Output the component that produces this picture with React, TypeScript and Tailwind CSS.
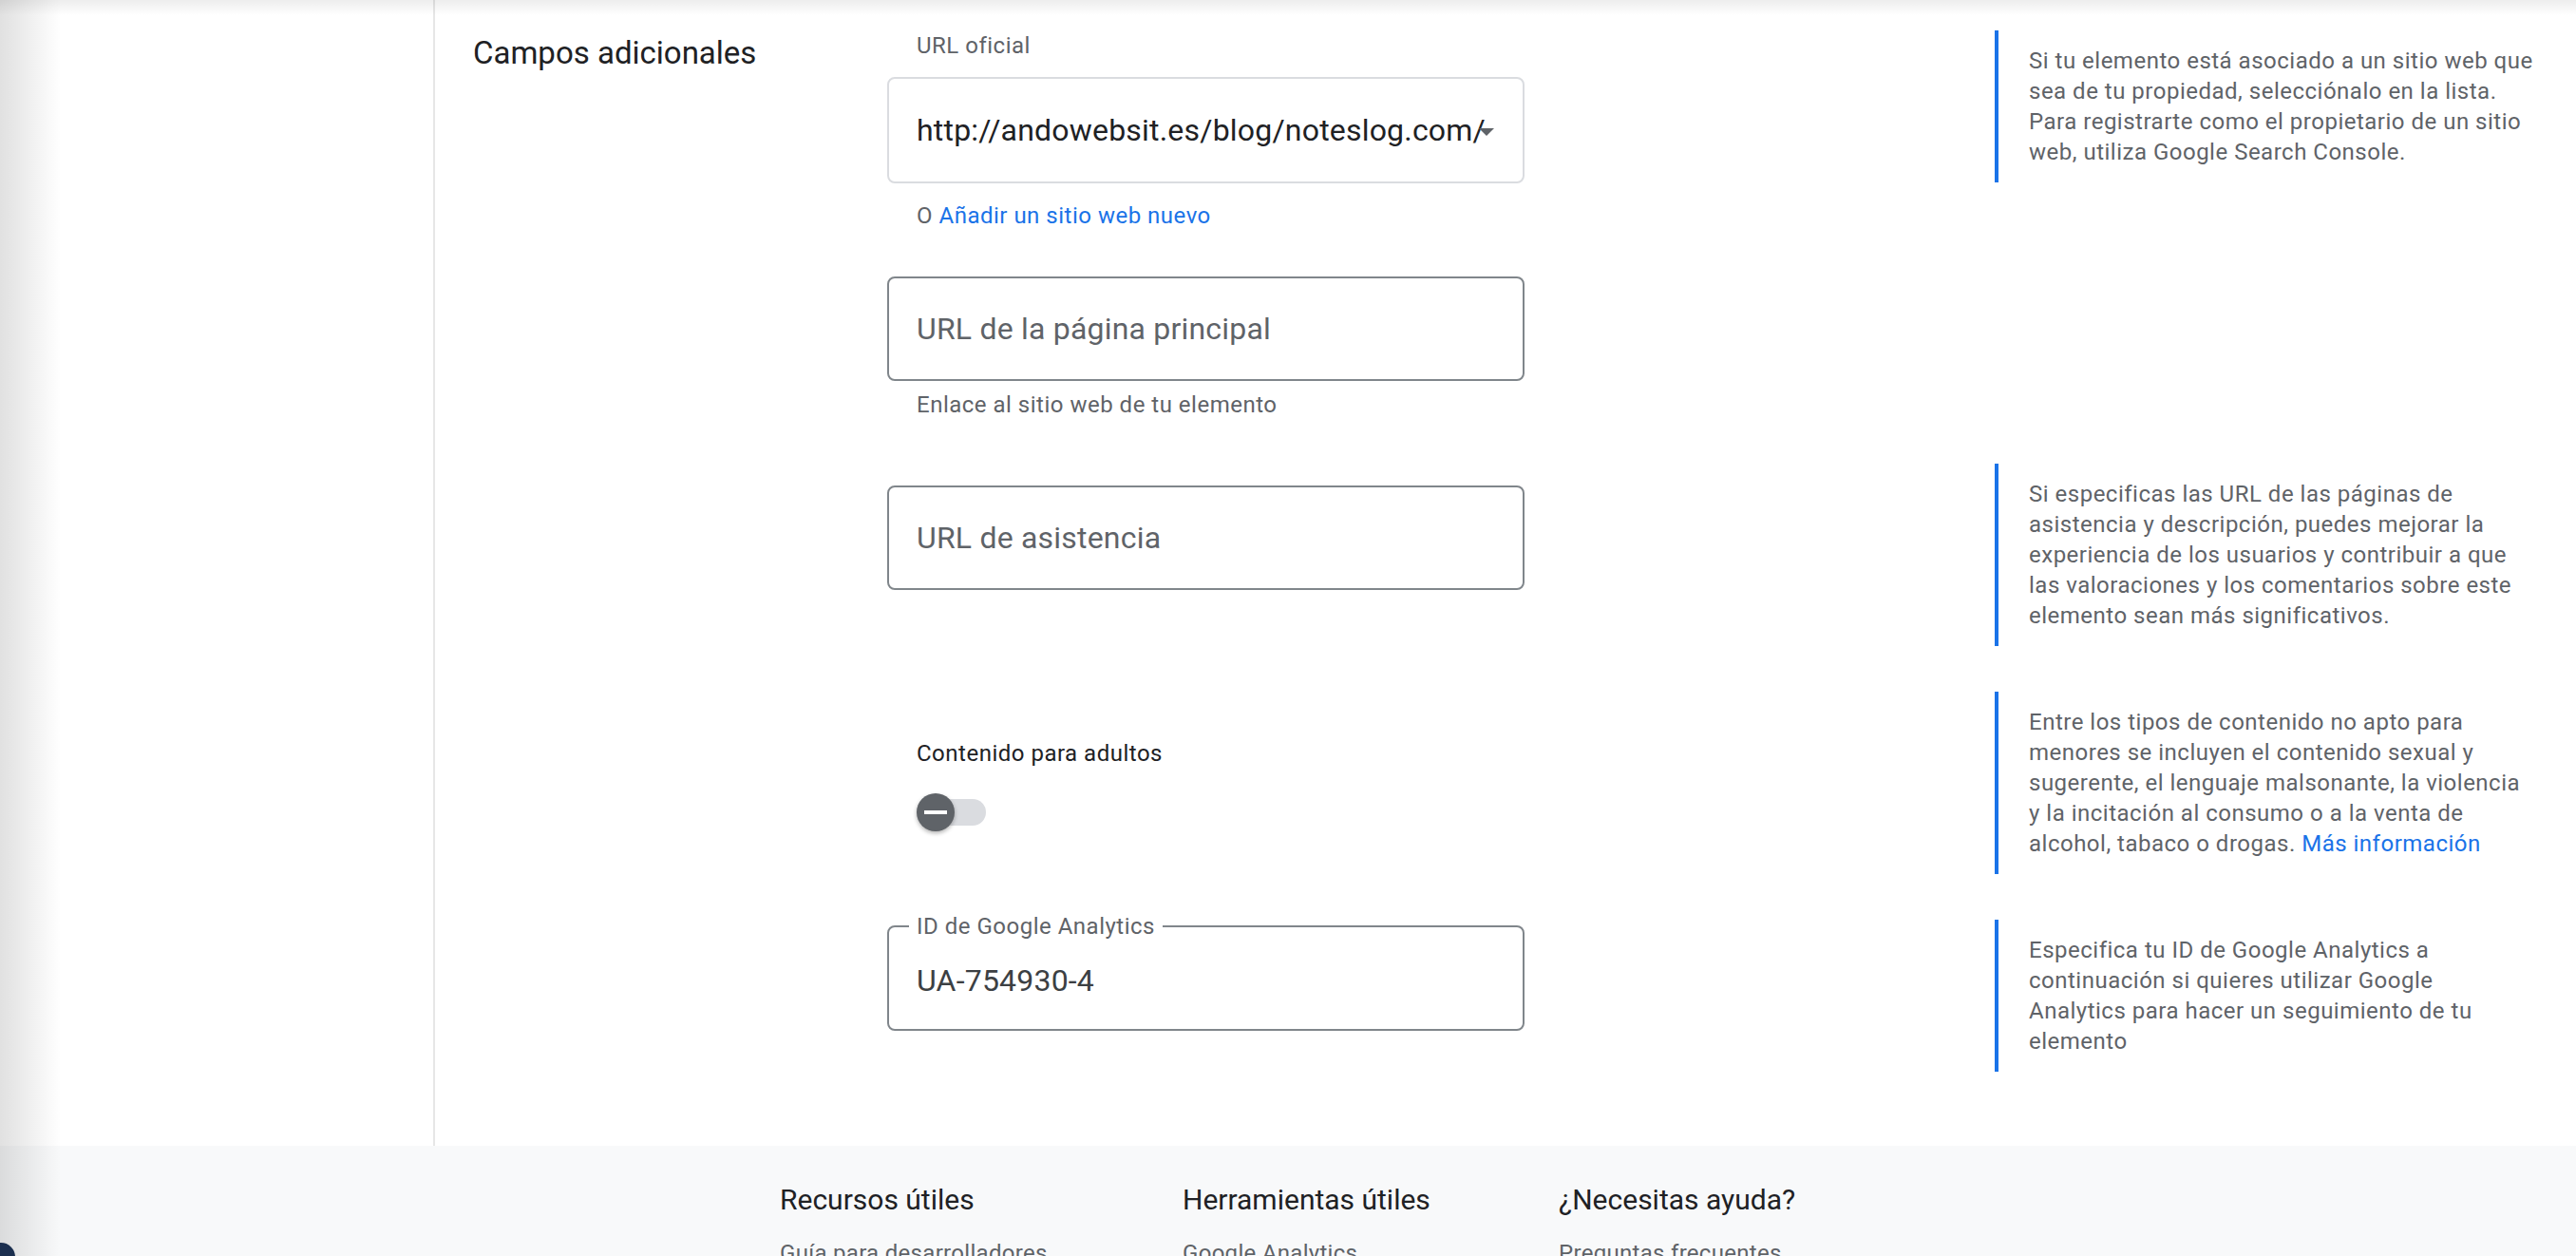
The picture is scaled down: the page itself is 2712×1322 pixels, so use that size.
import type { ReactNode } from 'react';

const FONT = "font-['Roboto','Noto_Sans',sans-serif]";

function HelpNote({ children }: { children: ReactNode }) {
  return (
    <div className="border-l-4 border-[#1a73e8] py-[16px] pl-[32px] text-[24px] leading-[32px] tracking-[0.5px] text-[#5f6368] whitespace-nowrap">
      {children}
    </div>
  );
}

function OutlinedField({ placeholder }: { placeholder: string }) {
  return (
    <div className="flex h-[110px] items-center rounded-[8px] border-2 border-[#80868b] pl-[29px] text-[32px] tracking-[0.2px] text-[#5f6368]">
      {placeholder}
    </div>
  );
}

function FooterColumn({ title, link, width }: { title: string; link: string; width: string }) {
  return (
    <div className={width}>
      <h3 className="text-[30px] leading-[40px] text-[#202124]">{title}</h3>
      <div className="mt-[20px] text-[24px] leading-[32px] tracking-[0.3px] text-[#5f6368]">{link}</div>
    </div>
  );
}

export default function App() {
  return (
    <div className={`relative flex h-[1322px] w-full flex-col overflow-hidden bg-white ${FONT}`}>
      <div className="flex">
        {/* sidebar */}
        <div className="w-[458px] shrink-0 border-r-2 border-[#e6e6e6]" />

        <main className="flex pl-[40px] pt-[32px] pb-[78px]">
          <div className="w-[436px] shrink-0">
            <h2 className="mt-[4px] text-[33px] leading-[40px] text-[#202124]">Campos adicionales</h2>
          </div>

          <div className="flex flex-col">
            {/* URL oficial */}
            <div className="flex items-start">
              <div className="w-[671px] shrink-0">
                <div className="pl-[31px] text-[24px] leading-[32px] tracking-[0.5px] text-[#5f6368]">URL oficial</div>
                <div className="relative mt-[17px] flex h-[112px] items-center overflow-hidden rounded-[8px] border-2 border-[#dadce0] pl-[29px]">
                  <span className="whitespace-nowrap text-[32px] tracking-[0.2px] text-[#202124]">
                    http://andowebsit.es/blog/noteslog.com/
                  </span>
                  <svg
                    className="absolute right-[30px] top-1/2 mt-[2px] -translate-y-1/2"
                    width="16"
                    height="8"
                    viewBox="0 0 16 8"
                  >
                    <path d="M0 0 L16 0 L8 8 Z" fill="#5f6368" />
                  </svg>
                </div>
                <div className="mt-[18px] pl-[31px] text-[24px] leading-[32px] tracking-[0.5px] text-[#5f6368]">
                  O <span className="text-[#1a73e8]">Añadir un sitio web nuevo</span>
                </div>
              </div>
              <div className="ml-[495px]">
                <HelpNote>
                  Si tu elemento está asociado a un sitio web que
                  <br />
                  sea de tu propiedad, selecciónalo en la lista.
                  <br />
                  Para registrarte como el propietario de un sitio
                  <br />
                  web, utiliza Google Search Console.
                </HelpNote>
              </div>
            </div>

            {/* URL de la página principal */}
            <div className="mt-[48px] w-[671px]">
              <OutlinedField placeholder="URL de la página principal" />
              <div className="mt-[9px] pl-[31px] text-[24px] leading-[32px] tracking-[0.5px] text-[#5f6368]">
                Enlace al sitio web de tu elemento
              </div>
            </div>

            {/* URL de asistencia */}
            <div className="mt-[46px] flex items-start">
              <div className="w-[671px] shrink-0 pt-[23px]">
                <OutlinedField placeholder="URL de asistencia" />
              </div>
              <div className="ml-[495px]">
                <HelpNote>
                  Si especificas las URL de las páginas de
                  <br />
                  asistencia y descripción, puedes mejorar la
                  <br />
                  experiencia de los usuarios y contribuir a que
                  <br />
                  las valoraciones y los comentarios sobre este
                  <br />
                  elemento sean más significativos.
                </HelpNote>
              </div>
            </div>

            {/* Contenido para adultos */}
            <div className="mt-[48px] flex items-start">
              <div className="w-[671px] shrink-0 pt-[49px]">
                <div className="pl-[31px] text-[24px] leading-[32px] tracking-[0.5px] text-[#202124]">
                  Contenido para adultos
                </div>
                <div className="relative ml-[31px] mt-[26px] flex h-[40px] w-[73px] items-center">
                  <div className="absolute left-[4px] right-0 h-[28px] rounded-full bg-[#dadce0]" />
                  <div className="relative flex h-[40px] w-[40px] items-center justify-center rounded-full bg-[#5f6368] shadow-[0_2px_4px_rgba(0,0,0,0.3)]">
                    <div className="h-[4px] w-[24px] bg-white" />
                  </div>
                </div>
              </div>
              <div className="ml-[495px]">
                <HelpNote>
                  Entre los tipos de contenido no apto para
                  <br />
                  menores se incluyen el contenido sexual y
                  <br />
                  sugerente, el lenguaje malsonante, la violencia
                  <br />
                  y la incitación al consumo o a la venta de
                  <br />
                  alcohol, tabaco o drogas. <span className="text-[#1a73e8]">Más información</span>
                </HelpNote>
              </div>
            </div>

            {/* ID de Google Analytics */}
            <div className="mt-[48px] flex items-start">
              <div className="w-[671px] shrink-0">
                <fieldset className="-mt-[9px] rounded-[8px] border-2 border-[#80868b] pl-[21px]">
                  <legend className="px-[8px] text-[24px] leading-[32px] tracking-[0.5px] text-[#5f6368]">
                    ID de Google Analytics
                  </legend>
                  <div className="flex h-[92px] items-center pb-[10px] pl-[8px] text-[32px] tracking-[0.2px] text-[#3c4043]">
                    UA-754930-4
                  </div>
                </fieldset>
              </div>
              <div className="ml-[495px]">
                <HelpNote>
                  Especifica tu ID de Google Analytics a
                  <br />
                  continuación si quieres utilizar Google
                  <br />
                  Analytics para hacer un seguimiento de tu
                  <br />
                  elemento
                </HelpNote>
              </div>
            </div>
          </div>
        </main>
      </div>

      <footer className="flex flex-1 bg-[#f8f9fa] pl-[821px] pt-[37px]">
        <FooterColumn width="w-[424px]" title="Recursos útiles" link="Guía para desarrolladores" />
        <FooterColumn width="w-[396px]" title="Herramientas útiles" link="Google Analytics" />
        <FooterColumn width="w-[400px]" title="¿Necesitas ayuda?" link="Preguntas frecuentes" />
      </footer>

      {/* page shadows */}
      <div className="pointer-events-none absolute inset-x-0 top-0 h-[16px] bg-linear-to-b from-black/[0.07] to-transparent" />
      <div className="pointer-events-none absolute inset-y-0 left-0 w-[64px] bg-linear-to-r from-black/[0.12] to-transparent" />
      <div className="absolute bottom-[-16px] left-[-14px] h-[30px] w-[30px] rounded-full bg-[#1b2f4f]" />
    </div>
  );
}
